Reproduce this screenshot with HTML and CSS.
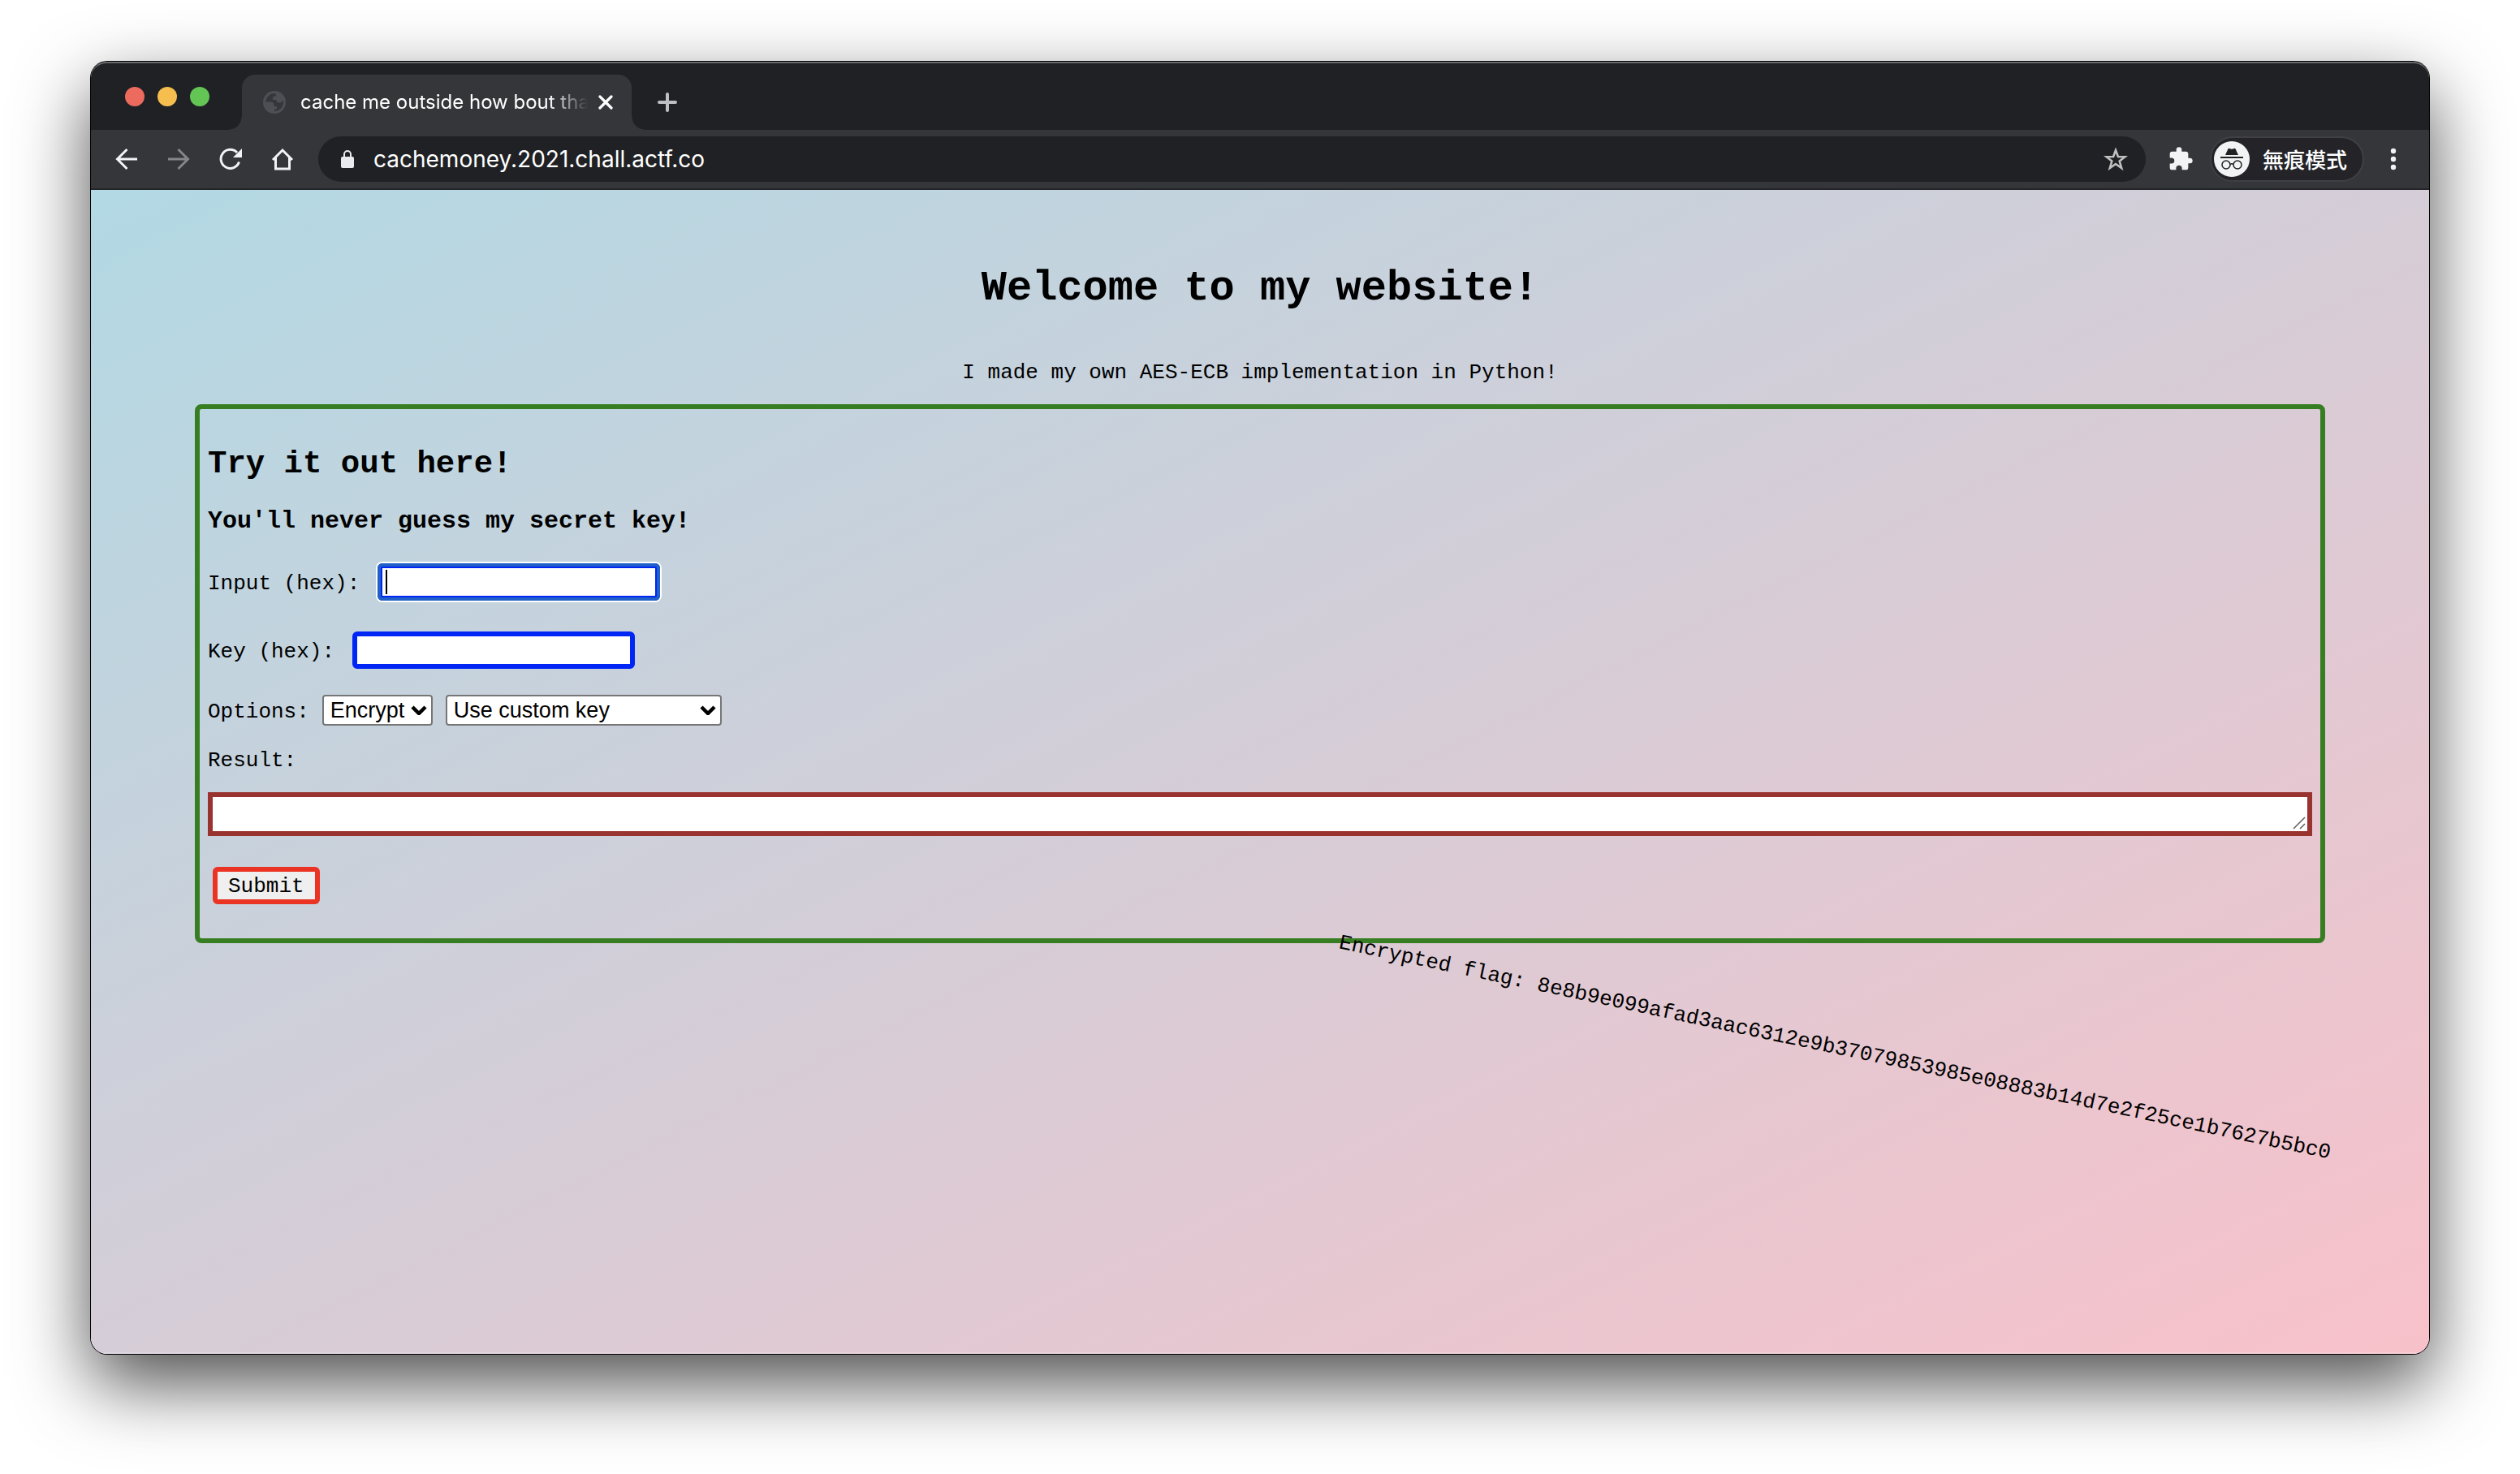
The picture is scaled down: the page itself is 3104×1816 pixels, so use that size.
FILE: index.html
```html
<!DOCTYPE html>
<html lang="en">
<head>
<meta charset="utf-8">
<title>cache me outside how bout tha</title>
<link rel="stylesheet" href="styles.css">
</head>
<body>
<div class="window">
  <header class="chrome">
    <div class="tabstrip">
      <div class="lights"><span class="light red"></span><span class="light yellow"></span><span class="light green"></span></div>
      <div class="tab">
        <svg class="favicon" viewBox="0 0 28 28"><circle cx="14" cy="14" r="14" fill="#4d4f54"/><path d="M15 3C8.500 3 3.500 8 3.200 13.500H9.500c2.500 0 4 1.500 4 4V19h3.500v3.500h-3v2.400C20 25 25 20 25 14c0-1-.1-2-.4-3-.6 2-2 3.500-4 3.500h-1.500c-1.500 0-2.600-1-2.600-2.500V11h-4.500V8.500c0-1 .8-2 2-2H16c0-1.500-.3-2.700-1-3.500z" fill="#35363a"/></svg>
        <span class="tab-title">cache me outside how bout tha</span>
        <button class="icon-button" aria-label="Close tab"><svg width="18" height="18" viewBox="0 0 18 18"><path d="M2 2l14 14M16 2L2 16" stroke="#fff" stroke-width="3.200" stroke-linecap="round"/></svg></button>
      </div>
      <button class="icon-button new-tab" aria-label="New tab"><svg width="24" height="24" viewBox="0 0 24 24"><path d="M12 2v20M2 12h20" stroke="#bdc1c6" stroke-width="4" stroke-linecap="round"/></svg></button>
    </div>
    <div class="toolbar">
      <nav class="nav">
        <button class="icon-button" aria-label="Back"><svg width="28" height="28" viewBox="0 0 28 28" fill="none" stroke="#f1f3f4" stroke-width="3"><path d="M27 14H3M14.500 2L2.500 14l12 12"/></svg></button>
        <button class="icon-button" aria-label="Forward"><svg width="28" height="28" viewBox="0 0 28 28" fill="none" stroke="#858688" stroke-width="3"><path d="M1 14h24M13.500 2l12 12-12 12"/></svg></button>
        <button class="icon-button" aria-label="Reload"><svg width="28" height="28" viewBox="0 0 28 28" fill="none"><path d="M24.500 17.500A11.500 11.500 0 1 1 22 6" stroke="#f1f3f4" stroke-width="3"/><path d="M28 1v11H17z" fill="#f1f3f4"/></svg></button>
        <button class="icon-button" aria-label="Home"><svg width="28" height="28" viewBox="0 0 28 28" fill="none" stroke="#f1f3f4" stroke-width="3"><path d="M2 15L14 3l12 12M5.500 12v14h17V12"/></svg></button>
      </nav>
      <div class="omnibox">
        <svg width="16" height="22" viewBox="0 0 16 22"><rect y="8" width="16" height="14" rx="2" fill="#e8eaed"/><path d="M4 9V5a4 4 0 0 1 8 0v4" fill="none" stroke="#e8eaed" stroke-width="2"/></svg>
        <input class="url" aria-label="Address" value="cachemoney.2021.chall.actf.co">
        <button class="icon-button" aria-label="Bookmark"><svg width="30" height="30" viewBox="0 0 30 30"><path d="M15 4l2.900 8 8.600.2-6.800 5.300 2.500 8.500L15 21l-7.200 5 2.500-8.500-6.800-5.300 8.600-.2z" fill="none" stroke="#c0c0c0" stroke-width="2.600"/></svg></button>
      </div>
      <button class="icon-button extensions" aria-label="Extensions"><svg width="32" height="32" viewBox="0 0 24 24"><path d="M20.500 11H19V7c0-1.100-.9-2-2-2h-4V3.500a2.500 2.500 0 0 0-5 0V5H4c-1.100 0-2 .9-2 2v3.800h1.500a2.700 2.700 0 0 1 0 5.400H2V20c0 1.100.9 2 2 2h3.800v-1.500a2.700 2.700 0 0 1 5.400 0V22H17c1.100 0 2-.9 2-2v-4h1.500a2.500 2.500 0 0 0 0-5z" fill="#f1f3f4"/></svg></button>
      <button class="incognito">
        <svg width="44" height="44" viewBox="0 0 44 44"><circle cx="22" cy="22" r="22" fill="#f1f3f4"/><path d="M14 17l3.400-7.400c.3-.7 1-.9 1.600-.6l3 .8 3-.8c.6-.3 1.300-.1 1.600.6L30 17z" fill="#202124"/><g fill="none" stroke="#202124"><path d="M8 20h28" stroke-width="2"/><circle cx="15" cy="29" r="5" stroke-width="1.500"/><circle cx="29" cy="29" r="5" stroke-width="1.500"/><path d="M20 28.500q2-1.500 4 0" stroke-width="1.500"/></g></svg>
        <span lang="zh-Hant">無痕模式</span>
      </button>
      <button class="icon-button menu" aria-label="Menu"><svg width="8" height="28" viewBox="0 0 8 28" fill="#f1f3f4"><circle cx="4" cy="4" r="3.200"/><circle cx="4" cy="14" r="3.200"/><circle cx="4" cy="24" r="3.200"/></svg></button>
    </div>
  </header>
  <main class="page">
    <h1>Welcome to my website!</h1>
    <p class="intro">I made my own AES-ECB implementation in Python!</p>
    <form class="panel">
      <h2>Try it out here!</h2>
      <h3>You'll never guess my secret key!</h3>
      <div class="field"><label for="data">Input (hex):</label><input class="box focused" id="data" type="text"></div>
      <div class="field"><label for="key">Key (hex):</label><input class="box" id="key" type="text"></div>
      <div class="options">
        <label for="mode">Options:</label>
        <span class="picker"><select id="mode"><option>Encrypt</option><option>Decrypt</option></select><svg width="20" height="12" viewBox="0 0 20 12"><path d="M2 2l8 8 8-8" fill="none" stroke="#000" stroke-width="4.500"/></svg></span>
        <span class="picker wide"><select aria-label="Key choice"><option>Use custom key</option><option>Use secret key</option></select><svg width="20" height="12" viewBox="0 0 20 12"><path d="M2 2l8 8 8-8" fill="none" stroke="#000" stroke-width="4.500"/></svg></span>
      </div>
      <label class="result-label" for="result">Result:</label>
      <div class="result"><textarea id="result" rows="1"></textarea><svg width="16" height="16" viewBox="0 0 16 16"><path d="M1 15L15 1M9 15l6-6" stroke="#606060" stroke-width="1.500"/></svg></div>
      <button class="submit" type="button">Submit</button>
    </form>
    <p class="flag">Encrypted flag: 8e8b9e099afad3aac6312e9b37079853985e08883b14d7e2f25ce1b7627b5bc0</p>
  </main>
</div>
</body>
</html>
```
FILE: styles.css
```css
* { box-sizing: border-box; }

body {
  margin: 0;
  min-height: 100vh;
  padding: 76px 112px 148px;
  display: flex;
  background: #fff;
  color: #000;
  font-family: "Liberation Mono", "Courier New", monospace;
  font-size: 26px;
  line-height: 30px;
}

h1, h2, h3, p { margin: 0; }
svg { display: block; flex: none; }

.window {
  flex: 1;
  min-width: 0;
  display: flex;
  flex-direction: column;
  overflow: hidden;
  border-radius: 20px;
  box-shadow: 0 0 0 1px #000, 0 36px 90px rgba(0, 0, 0, 0.7);
}

/* Browser chrome */
.chrome {
  background: #35363a;
  border-bottom: 2px solid #242528;
  font-family: Inter, "Noto Sans CJK TC", sans-serif;
  color: #fff;
}

.icon-button {
  display: flex;
  flex: none;
  padding: 0;
  border: 0;
  background: none;
}

.tabstrip {
  display: flex;
  height: 84px;
  padding: 14px 0 0 42px;
  background: #202124;
  border-top: 2px solid #686a6b;
  border-radius: 20px 20px 0 0;
}

.lights { display: flex; gap: 16px; padding-top: 15px; }
.light { width: 24px; height: 24px; border-radius: 50%; }
.red { background: #ec6a5e; }
.yellow { background: #f5be4f; }
.green { background: #62c554; }

.tab {
  position: relative;
  display: flex;
  align-items: center;
  width: 480px;
  height: 68px;
  margin-left: 40px;
  padding: 0 23px 0 26px;
  background: #35363a;
  border-radius: 16px 16px 0 0;
}

/* Flared feet that join the tab to the toolbar */
.tab::before,
.tab::after {
  content: "";
  position: absolute;
  bottom: 0;
  width: 16px;
  height: 16px;
}
.tab::before { left: -16px; background: radial-gradient(circle at 0 0, #202124 15px, #35363a 16px); }
.tab::after { right: -16px; background: radial-gradient(circle at 100% 0, #202124 15px, #35363a 16px); }

.favicon { width: 28px; height: 28px; }

.tab-title {
  flex: 1;
  min-width: 0;
  margin: 0 13px 0 18px;
  white-space: nowrap;
  font-size: 24px;
  -webkit-mask-image: linear-gradient(to right, #000 calc(100% - 48px), transparent);
  mask-image: linear-gradient(to right, #000 calc(100% - 48px), transparent);
}

.new-tab { margin-left: 32px; align-items: center; height: 68px; }

.toolbar {
  display: flex;
  align-items: center;
  height: 72px;
  padding: 0 40px 0 30px;
}

.nav { display: flex; gap: 36px; margin-right: 30px; }

.omnibox {
  flex: 1;
  display: flex;
  align-items: center;
  height: 56px;
  padding: 0 22px 0 28px;
  border-radius: 28px;
  background: #202124;
}

.url {
  flex: 1;
  min-width: 0;
  margin: 0 0 0 24px;
  padding: 0;
  border: 0;
  outline: 0;
  background: none;
  color: #fff;
  font: 28px/34px Inter, sans-serif;
}

.extensions { margin: 0 20px 0 27px; }

.incognito {
  display: flex;
  align-items: center;
  gap: 16px;
  height: 56px;
  padding: 0 19px 0 3px;
  border: 2px solid #3f4045;
  border-radius: 28px;
  background: #242428;
  color: #fff;
  font: 500 26px/30px "Noto Sans CJK TC", sans-serif;
}

.menu { margin-left: 32px; }

/* Page */
.page {
  flex: 1;
  display: flex;
  flex-direction: column;
  padding: 92px 128px 0;
  overflow: hidden;
  background: linear-gradient(to bottom right, #b2d9e4, #f8c1ca);
  box-shadow: inset 0 -2px 0 rgba(255, 255, 255, 0.2);
}

h1 { font-size: 52px; line-height: 60px; text-align: center; }
.intro { margin-top: 58px; text-align: center; }

.panel {
  display: flex;
  flex-direction: column;
  margin-top: 24px;
  padding: 46px 10px 42px;
  border: 6px solid #377e22;
  border-radius: 8px;
}

h2 { font-size: 39px; line-height: 44px; }
h3 { margin-top: 31px; font-size: 30px; line-height: 34px; }

.field, .options { display: flex; align-items: center; }
.field { gap: 22px; margin-top: 38px; }
h3 + .field { margin-top: 35px; }
.field label, .options label { padding-top: 4px; }

.box {
  width: 348px;
  height: 46px;
  padding: 2px 4px;
  border: 6px solid #0026f5;
  border-radius: 6px;
  background: #fff;
  font: 26px/30px "Liberation Sans", Arial, sans-serif;
}

.focused {
  outline: 4px solid #2060c8;
  outline-offset: -4px;
  box-shadow: 0 0 0 2px #fff;
  background: linear-gradient(#000, #000) 4px 2px / 2px 30px no-repeat #fff;
}

.options { gap: 16px; margin-top: 32px; }
.picker { display: grid; align-items: center; width: 136px; }
.picker.wide { width: 340px; }
.picker select, .picker svg { grid-area: 1 / 1; }
.picker svg { justify-self: end; margin-right: 7px; pointer-events: none; }

.picker select {
  width: 100%;
  height: 38px;
  margin: 0;
  padding: 0 8px;
  border: 2px solid #767676;
  border-radius: 4px;
  appearance: none;
  background: #fff;
  color: #000;
  font: 27px/32px "Liberation Sans", Arial, sans-serif;
}

.result-label { align-self: flex-start; margin-top: 28px; }
.result { display: grid; margin-top: 24px; }
.result textarea, .result svg { grid-area: 1 / 1; }
.result svg { place-self: end; margin: 8px; pointer-events: none; }

.result textarea {
  width: 100%;
  height: 54px;
  padding: 4px;
  border: 6px solid #993330;
  border-radius: 0;
  background: #fff;
  font: 26px/30px "Liberation Mono", monospace;
  resize: none;
  overflow: hidden;
}

.submit {
  align-self: flex-start;
  margin: 38px 0 0 6px;
  height: 46px;
  padding: 2px 13px 0;
  border: 6px solid #eb3323;
  border-radius: 6px;
  background: #efefef;
  color: #000;
  font: 26px/30px "Liberation Mono", monospace;
}

.flag {
  align-self: flex-end;
  margin: 114px -20px 0 0;
  white-space: nowrap;
  transform: rotate(12deg);
}
```
